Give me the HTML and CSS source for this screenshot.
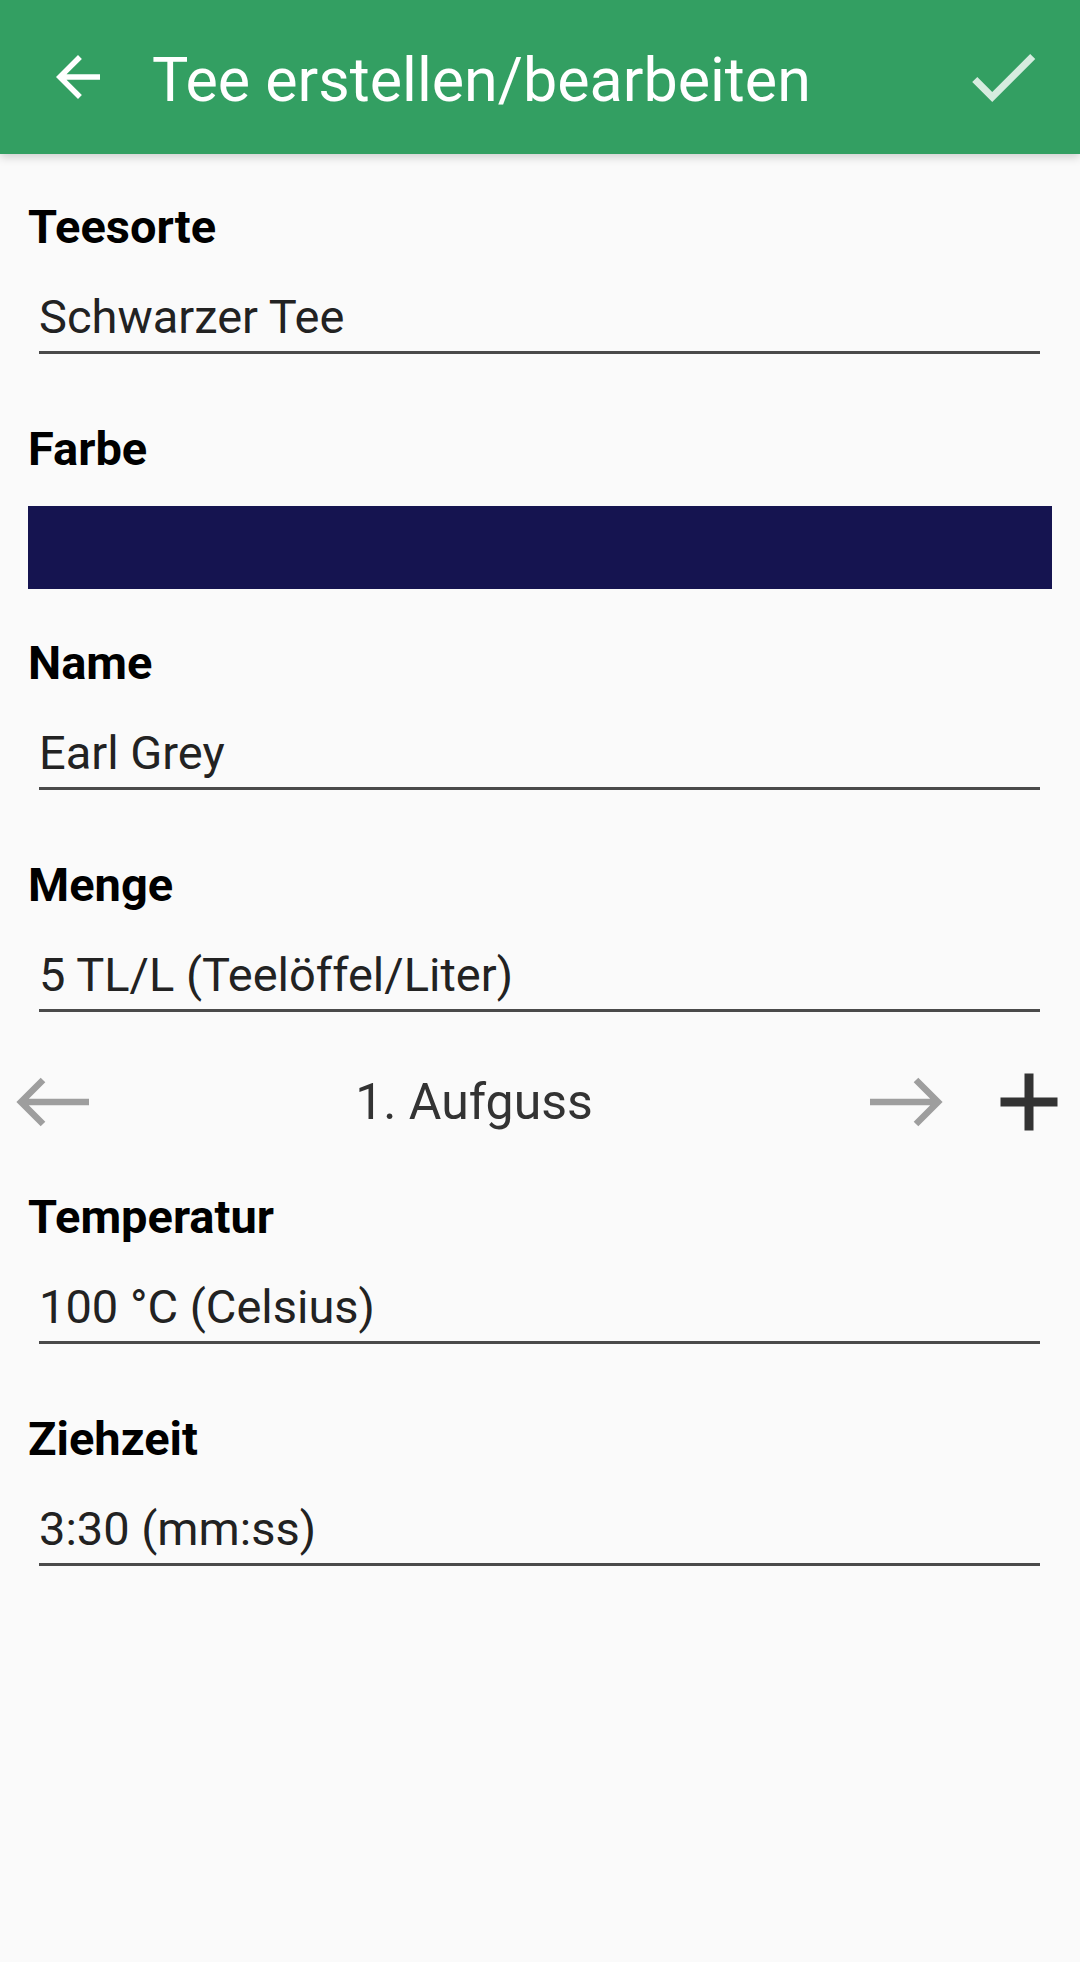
FILE: index.html
```html
<!DOCTYPE html>
<html lang="de">
<head>
<meta charset="utf-8">
<title>Tee erstellen/bearbeiten</title>
<link rel="stylesheet" href="styles.css">
</head>
<body>
<header class="appbar">
  <svg class="nav-icon" width="66" height="66" viewBox="0 0 24 24"><path fill="#fff" d="M20 11H7.83l5.59-5.59L12 4l-8 8 8 8 1.41-1.41L7.83 13H20v-2z"/></svg>
  <h1 class="title">Tee erstellen/bearbeiten</h1>
  <svg class="check-icon" width="86" height="86" viewBox="0 0 24 24"><path fill="#fff" fill-opacity="0.8" d="M9 16.17L4.83 12l-1.42 1.41L9 19 21 7l-1.41-1.41z"/></svg>
</header>
<main class="content">
  <section class="field">
    <div class="label">Teesorte</div>
    <div class="input">Schwarzer Tee</div>
  </section>
  <section class="field color-field">
    <div class="label">Farbe</div>
    <div class="swatch"></div>
  </section>
  <section class="field">
    <div class="label">Name</div>
    <div class="input">Earl Grey</div>
  </section>
  <section class="field">
    <div class="label">Menge</div>
    <div class="input">5 TL/L (Teelöffel/Liter)</div>
  </section>
  <div class="infusion-row">
    <svg class="arrow" width="80" height="60" viewBox="0 0 80 60"><path d="M75 30H8M29 8L7 30L29 52" fill="none" stroke="#9e9e9e" stroke-width="6.5" stroke-linejoin="miter"/></svg>
    <div class="infusion">1. Aufguss</div>
    <svg class="arrow" width="80" height="60" viewBox="0 0 80 60"><path d="M6 30H73M52 8L74 30L52 52" fill="none" stroke="#9e9e9e" stroke-width="6.5" stroke-linejoin="miter"/></svg>
    <svg class="plus" width="60" height="60" viewBox="0 0 60 60"><path d="M30 1.5V58.5M1.5 30H58.5" fill="none" stroke="#333" stroke-width="9"/></svg>
  </div>
  <section class="field">
    <div class="label">Temperatur</div>
    <div class="input">100 °C (Celsius)</div>
  </section>
  <section class="field">
    <div class="label">Ziehzeit</div>
    <div class="input">3:30 (mm:ss)</div>
  </section>
</main>
</body>
</html>
```
FILE: styles.css
```css
html, body {
  margin: 0;
  padding: 0;
  background: #fafafa;
  font-family: Roboto, "Noto Sans", sans-serif;
}
body {
  width: 1080px;
  height: 1962px;
  overflow: hidden;
}
.appbar {
  height: 154px;
  background: #339f62;
  display: flex;
  align-items: center;
  box-shadow: 0 3px 9px rgba(0, 0, 0, 0.18);
  position: relative;
  z-index: 1;
}
.nav-icon {
  margin-left: 45px;
  flex: none;
}
.title {
  margin: 0 0 0 41px;
  padding-top: 5px;
  flex: 1;
  font-size: 61px;
  font-weight: 400;
  color: #fff;
  line-height: 70px;
  white-space: nowrap;
}
.check-icon {
  margin-right: 34px;
  flex: none;
}
.content {
  padding: 45px 28px 0 28px;
  display: flex;
  flex-direction: column;
}
.field {
  display: flex;
  flex-direction: column;
}
.field + .field {
  margin-top: 67px;
}
.label {
  font-size: 47px;
  font-weight: 700;
  line-height: 56px;
  height: 56px;
  color: #000;
}
.input {
  margin: 34px 12px 0 11px;
  padding-bottom: 6px;
  border-bottom: 3px solid #4a4a4a;
  font-size: 47px;
  line-height: 56px;
  color: #222;
}
.swatch {
  margin-top: 29px;
  height: 83px;
  background: #151450;
}
.color-field + .field {
  margin-top: 46px;
}
.infusion-row {
  margin: 45px -7px 0 -14px;
  height: 90px;
  display: flex;
  align-items: center;
}
.arrow, .plus {
  flex: none;
}
.infusion {
  flex: 1;
  text-align: center;
  font-size: 50px;
  color: #333;
  padding-right: 10px;
}
.plus {
  margin-left: 55px;
}
.infusion-row + .field {
  margin-top: 42px;
}
```
